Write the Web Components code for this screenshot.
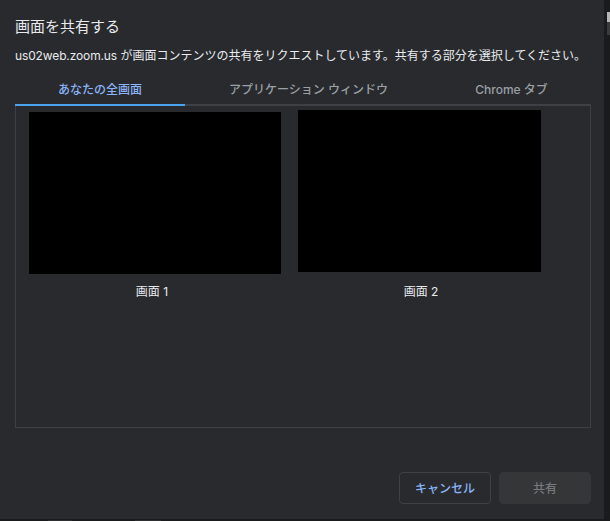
<!DOCTYPE html>
<html><head><meta charset="utf-8"><style>
html,body{margin:0;padding:0;background:#1a1b1d;}
body{width:610px;height:521px;overflow:hidden;font-family:Inter,"Noto Sans CJK JP",sans-serif;
background:
 linear-gradient(#b4b4b4,#b4b4b4) 607px 12px/3px 10px no-repeat,
 linear-gradient(#3a3b3d,#3a3b3d) 607px 22px/3px 13px no-repeat,
 linear-gradient(#2e2f31,#2e2f31) 48px 520px/24px 1px no-repeat,
 linear-gradient(#2e2f31,#2e2f31) 135px 520px/26px 1px no-repeat,
 #1a1b1d;}
</style></head><body>
<share-dialog>
  <span slot="title">画面を共有する</span>
  <span slot="message"><span style="letter-spacing:-.13px">us02web.zoom.us</span> が画面コンテンツの共有をリクエストしています。共有する部分を選択してください。</span>
  <share-tabs slot="tabs">
    <share-tab active style="width:170px">あなたの全画面</share-tab>
    <share-tab style="width:247px">アプリケーション ウィンドウ</share-tab>
    <share-tab style="width:159px">Chrome タブ</share-tab>
  </share-tabs>
  <screen-thumb slot="panel" label="画面 1" w="252" h="162" top="2" ml="13" gap="10" pr="6"></screen-thumb>
  <screen-thumb slot="panel" label="画面 2" w="243" h="162" top="0" ml="17" gap="12" pl="3"></screen-thumb>
  <dialog-button slot="actions">キャンセル</dialog-button>
  <dialog-button slot="actions" disabled>共有</dialog-button>
</share-dialog>
<script>
function def(name,html,extra){
  const t=document.createElement('template');t.innerHTML=html;
  customElements.define(name,class extends HTMLElement{
    constructor(){super();this.attachShadow({mode:'open'}).appendChild(t.content.cloneNode(true));}
    connectedCallback(){extra&&extra.call(this);}
  });
}
def('share-dialog',`<style>
:host{display:flex;flex-direction:column;box-sizing:border-box;width:604px;height:519px;background:#292a2d;padding:17px 13px 15px 15px;}
.title{font-size:15px;line-height:20px;color:#e8eaed;}
.msg{margin-top:10px;font-size:12px;line-height:18px;color:#e8eaed;white-space:nowrap;}
.tabs{margin-top:9px;}
.panel{box-sizing:border-box;height:322px;padding-top:4px;border:1px solid #3f4043;border-top:0;display:flex;align-items:flex-start;}
.actions{margin-top:44px;display:flex;justify-content:flex-end;gap:8px;}
</style>
<div class="title"><slot name="title"></slot></div>
<div class="msg"><slot name="message"></slot></div>
<div class="tabs"><slot name="tabs"></slot></div>
<div class="panel"><slot name="panel"></slot></div>
<div class="actions"><slot name="actions"></slot></div>`);
def('share-tabs',`<style>:host{display:flex;height:30px;border-bottom:2px solid #3f4043;width:576px}</style><slot></slot>`);
def('share-tab',`<style>
:host{display:flex;align-items:center;justify-content:center;height:32px;box-sizing:border-box;padding-bottom:1px;font-size:12px;font-weight:500;color:#9aa0a6;border-bottom:2px solid transparent;}
:host([active]){color:#8ab4f8;border-bottom-color:#4aa3ef;}
</style><slot></slot>`);
def('screen-thumb',`<style>
:host{display:flex;flex-direction:column;align-items:center;}
.img{background:#000;}
.label{font-size:12px;line-height:16px;color:#e8eaed;}
</style><div class="img"></div><div class="label"></div>`,function(){
  const g=a=>this.getAttribute(a);
  const i=this.shadowRoot.querySelector('.img');
  i.style.width=g('w')+'px';i.style.height=g('h')+'px';
  this.style.marginTop=g('top')+'px';this.style.marginLeft=g('ml')+'px';
  const l=this.shadowRoot.querySelector('.label');
  l.textContent=g('label');l.style.marginTop=g('gap')+'px';
  l.style.paddingRight=(g('pr')||0)+'px';l.style.paddingLeft=(g('pl')||0)+'px';
});
def('dialog-button',`<style>
:host{display:flex;align-items:center;justify-content:center;box-sizing:border-box;width:92px;height:32px;padding-bottom:2px;border:1px solid #3f4145;border-radius:4px;font-size:12px;font-weight:500;color:#8ab4f8;}
:host([disabled]){background:#353638;border-color:#353638;color:#77797c;}
</style><slot></slot>`);
</script>
</body></html>
